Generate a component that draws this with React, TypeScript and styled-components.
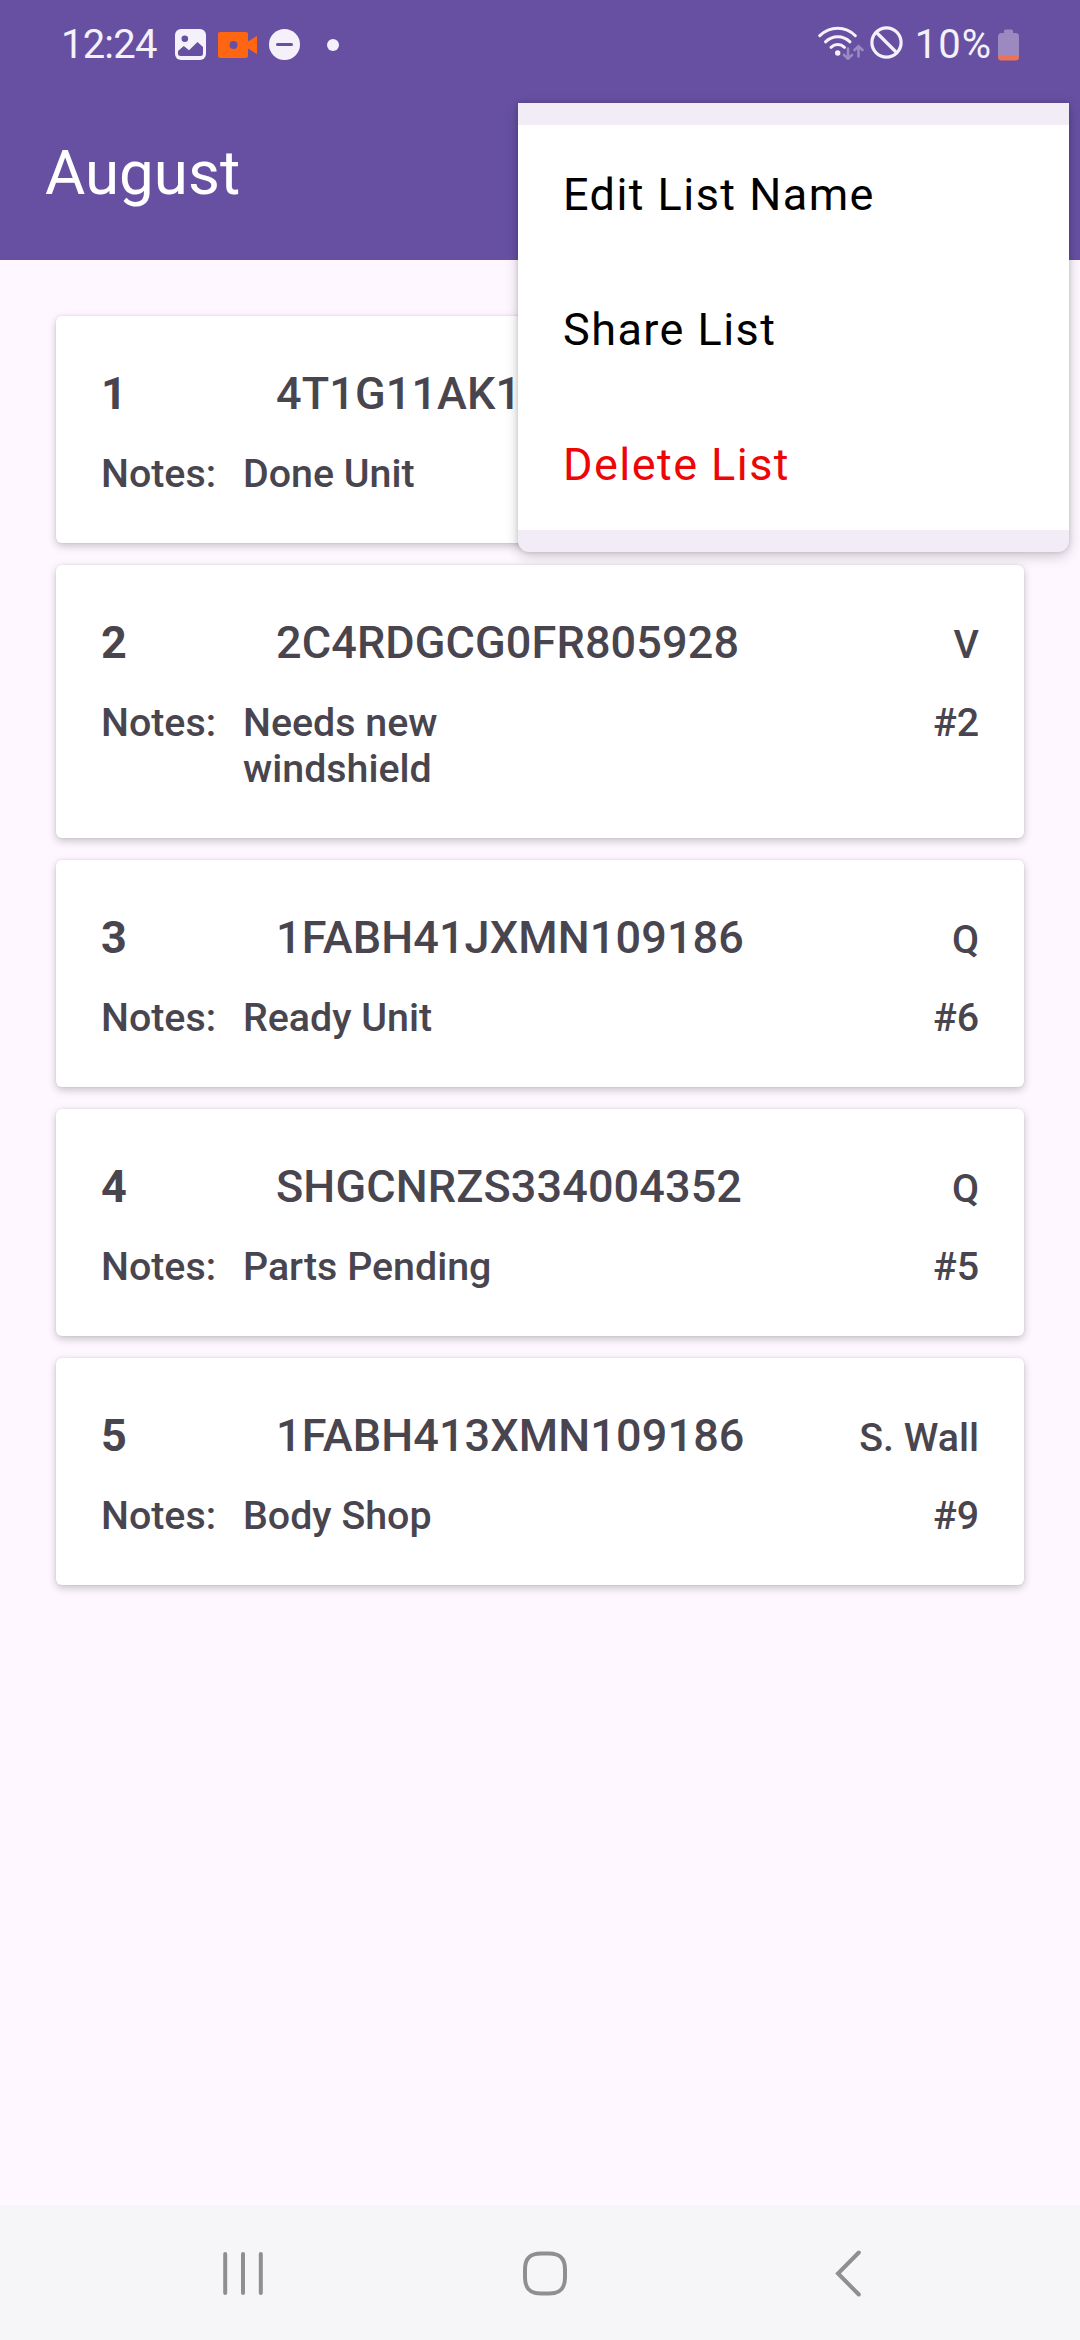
import React from "react";
import styled, { createGlobalStyle } from "styled-components";

const GlobalStyle = createGlobalStyle`
  *, *::before, *::after { box-sizing: border-box; }
  body { margin: 0; background: #fef7ff; }
`;

const Screen = styled.div`
  position: relative;
  display: flex;
  flex-direction: column;
  width: 1080px;
  height: 2340px;
  overflow: hidden;
  background: #fef7ff;
  color: #49454f;
  font-family: Roboto, "Noto Sans", sans-serif;
`;

const Header = styled.header`
  flex: none;
  height: 260px;
  background: #6750a2;
`;

const StatusBar = styled.div`
  display: flex;
  align-items: center;
  justify-content: space-between;
  height: 89px;
  padding: 0 61px 0 61px;
`;

const StatusGroup = styled.div`
  display: flex;
  align-items: center;
`;

const SignalGroup = styled(StatusGroup)`
  margin-right: 12px;
  padding-bottom: 4px;
`;

const StatusText = styled.span<{ $spacing: number }>`
  color: #f4f1fb;
  font-family: Roboto, sans-serif;
  font-size: 40px;
  line-height: 48px;
  letter-spacing: ${(p) => p.$spacing}px;
  white-space: nowrap;
`;

const StatusIcon = styled.svg<{ $gap: number }>`
  display: block;
  flex: none;
  margin-left: ${(p) => p.$gap}px;
`;

const Toolbar = styled.div`
  display: flex;
  align-items: center;
  height: 171px;
  padding: 0 45px 4px;
`;

const Title = styled.h1`
  margin: 0;
  color: #ffffff;
  font-size: 61.875px;
  font-weight: 400;
  line-height: 72px;
`;

const List = styled.main`
  display: flex;
  flex: 1;
  flex-direction: column;
  gap: 22px;
  padding: 56px 56px 0;
`;

const Card = styled.article`
  display: flex;
  flex-direction: column;
  gap: 31px;
  padding: 52px 45px 46px;
  border-radius: 6px;
  background: #ffffff;
  box-shadow: 0 3px 8px rgba(0, 0, 0, 0.22), 0 0 3px rgba(0, 0, 0, 0.08);
`;

const CardRow = styled.div`
  display: flex;
  align-items: baseline;
`;

const Index = styled.span`
  width: 175px;
  font-size: 45px;
  font-weight: 700;
  line-height: 52px;
`;

const Vin = styled.span`
  flex: 1;
  font-size: 45px;
  font-weight: 500;
  line-height: 52px;
  letter-spacing: 0.12px;
`;

const Label = styled.span<{ $width?: number }>`
  width: ${(p) => (p.$width ? `${p.$width}px` : "auto")};
  font-size: 39.375px;
  font-weight: 500;
  line-height: 46px;
  white-space: nowrap;
`;

const Note = styled.p`
  width: 281px;
  margin: 0 auto 0 0;
  font-size: 39.375px;
  font-weight: 500;
  line-height: 46px;
`;

const Menu = styled.div`
  position: absolute;
  top: 103px;
  left: 518px;
  width: 551px;
  padding: 22px 0;
  border-radius: 0 0 11px 11px;
  background: #f2ecf7;
  box-shadow: 0 4px 14px rgba(0, 0, 0, 0.2), 0 0 5px rgba(0, 0, 0, 0.14);
`;

const MenuItem = styled.div<{ $color: string }>`
  display: flex;
  align-items: center;
  height: 135px;
  padding: 4px 45px 0;
  background: #ffffff;
  color: ${(p) => p.$color};
  font-size: 45px;
  line-height: 52px;
  letter-spacing: 1.45px;
`;

const NavBar = styled.nav`
  display: grid;
  grid-template-columns: repeat(3, 302px);
  flex: none;
  align-items: center;
  height: 135px;
  padding-left: 92px;
  background: #f6f6f8;
`;

const NavButton = styled.div`
  display: flex;
  justify-content: center;
`;

interface Unit {
  vin: string;
  place: string;
  note: string;
  slot: string;
}

const units: Unit[] = [
  { vin: "4T1G11AK1", place: "", note: "Done Unit", slot: "" },
  { vin: "2C4RDGCG0FR805928", place: "V", note: "Needs new windshield", slot: "#2" },
  { vin: "1FABH41JXMN109186", place: "Q", note: "Ready Unit", slot: "#6" },
  { vin: "SHGCNRZS334004352", place: "Q", note: "Parts Pending", slot: "#5" },
  { vin: "1FABH413XMN109186", place: "S. Wall", note: "Body Shop", slot: "#9" },
];

const menuItems = [
  { label: "Edit List Name", color: "#000000" },
  { label: "Share List", color: "#000000" },
  { label: "Delete List", color: "#ee0505" },
];

const INK = "#f4f1fb";

const StatusIcons = () => (
  <>
    <StatusIcon $gap={18} width="31" height="31" viewBox="0 0 31 31">
      <rect width="31" height="31" rx="6" fill={INK} />
      <circle cx="9.8" cy="9.8" r="3.3" fill="#6750a2" />
      <path d="M3 22L8.800 17L14 21.300L22.500 13L28 18V24.500Q28 27 25.500 27H5.500Q3 27 3 24.500Z" fill="#6750a2" />
    </StatusIcon>
    <StatusIcon $gap={12} width="39" height="26" viewBox="0 0 39 26">
      <path
        fillRule="evenodd"
        d="M2 0H28Q30 0 30 2V9.500L39 4V22L30 16.500V24Q30 26 28 26H2Q0 26 0 24V2Q0 0 2 0ZM15.500 9A4 4 0 1 0 15.500 17A4 4 0 1 0 15.500 9Z"
        fill="#ff6611"
      />
    </StatusIcon>
    <StatusIcon $gap={12} width="31" height="31" viewBox="0 0 31 31">
      <circle cx="15.500" cy="15.500" r="15.500" fill={INK} />
      <path d="M8.500 15.500H22.500" stroke="#6750a2" strokeWidth="3" strokeLinecap="round" />
    </StatusIcon>
    <StatusIcon $gap={27} width="12" height="12" viewBox="0 0 12 12">
      <circle cx="6" cy="6" r="6" fill={INK} />
    </StatusIcon>
  </>
);

const SignalIcons = () => (
  <SignalGroup>
    <StatusIcon $gap={0} width="46" height="34" viewBox="0 0 46 34" fill="none" strokeLinecap="round">
      <path d="M1.800 9.700C12 -0.200 27.500 -0.200 37.300 9.700" stroke={INK} strokeWidth="3" />
      <path d="M7.500 15.800C14.500 9 25 9 32 15.800" stroke={INK} strokeWidth="3" />
      <path d="M13 21.300C17 17.600 22.500 17.600 26.500 21.300" stroke={INK} strokeWidth="3" />
      <circle cx="19.700" cy="27" r="2.700" fill={INK} />
      <path d="M30 22.500V33M26 29L30 32.600L34 29" stroke="#9b89c4" strokeWidth="2.600" />
      <path d="M40.500 30.500V20.500M36.500 24L40.500 20.200L44.500 24" stroke="#9b89c4" strokeWidth="2.600" />
    </StatusIcon>
    <StatusIcon $gap={6} width="33" height="33" viewBox="0 0 33 33" fill="none" stroke={INK} strokeWidth="3.200">
      <circle cx="16.500" cy="16.500" r="14.600" />
      <path d="M6.500 6.500L26.500 26.500" />
    </StatusIcon>
  </SignalGroup>
);

const Battery = () => (
  <StatusIcon $gap={6} width="21" height="32" viewBox="0 0 21 32">
    <path d="M6 4V2Q6 0.500 7.500 0.500H13.500Q15 0.500 15 2V4H17.500Q21 4 21 7.500V27H0V7.500Q0 4 3.500 4Z" fill="#9b89c0" />
    <path d="M0 26.500H21V28Q21 31.500 17.500 31.500H3.500Q0 31.500 0 28Z" fill="#ed7357" />
  </StatusIcon>
);

export default function App() {
  return (
    <>
      <GlobalStyle />
      <Screen>
        <Header>
          <StatusBar>
            <StatusGroup>
              <StatusText $spacing={-0.8}>12:24</StatusText>
              <StatusIcons />
            </StatusGroup>
            <StatusGroup>
              <SignalIcons />
              <StatusText $spacing={1}>10%</StatusText>
              <Battery />
            </StatusGroup>
          </StatusBar>
          <Toolbar>
            <Title>August</Title>
          </Toolbar>
        </Header>
        <List>
          {units.map((unit, i) => (
            <Card key={i}>
              <CardRow>
                <Index>{i + 1}</Index>
                <Vin>{unit.vin}</Vin>
                <Label>{unit.place}</Label>
              </CardRow>
              <CardRow>
                <Label $width={142}>Notes:</Label>
                <Note>{unit.note}</Note>
                <Label>{unit.slot}</Label>
              </CardRow>
            </Card>
          ))}
        </List>
        <NavBar>
          <NavButton>
            <svg width="60" height="60" viewBox="213 2242.5 60 60" stroke="#8f8f8f" strokeWidth="4" strokeLinecap="round">
              <path d="M225.200 2253.500V2292.500M243 2253.500V2292.500M260.800 2253.500V2292.500" />
            </svg>
          </NavButton>
          <NavButton>
            <svg width="60" height="60" viewBox="515 2242.5 60 60" fill="none" stroke="#8f8f8f" strokeWidth="4">
              <path d="M541 2253H549C560 2253 565 2258 565 2269V2277C565 2288 560 2293 549 2293H541C530 2293 525 2288 525 2277V2269C525 2258 530 2253 541 2253Z" />
            </svg>
          </NavButton>
          <NavButton>
            <svg width="60" height="60" viewBox="817 2242.5 60 60" fill="none" stroke="#8f8f8f" strokeWidth="4" strokeLinecap="round">
              <path d="M858.800 2252L838 2273L858.800 2294" />
            </svg>
          </NavButton>
        </NavBar>
        <Menu>
          {menuItems.map((item) => (
            <MenuItem key={item.label} $color={item.color}>
              {item.label}
            </MenuItem>
          ))}
        </Menu>
      </Screen>
    </>
  );
}
